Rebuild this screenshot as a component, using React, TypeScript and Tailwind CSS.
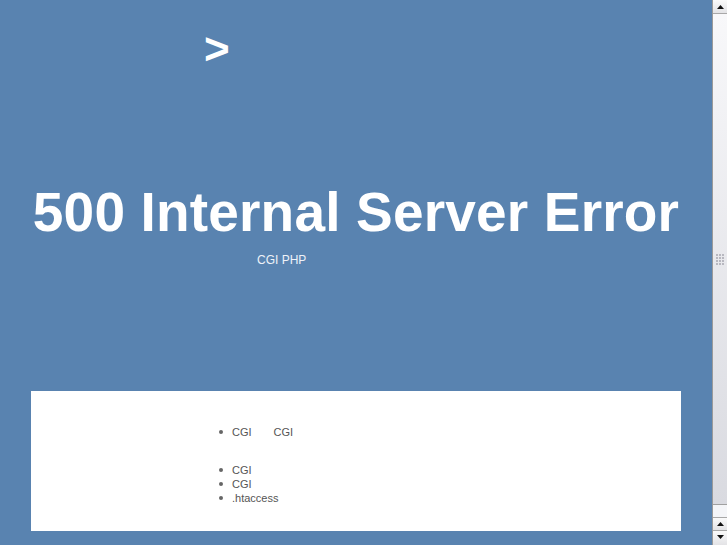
const font = { fontFamily: '"Liberation Sans", Arial, sans-serif' };

function ArrowUp() {
  return (
    <svg width="7" height="4" viewBox="0 0 7 4" className="block">
      <path d="M0 4 L3.5 0 L7 4 Z" fill="#111" />
    </svg>
  );
}

function ArrowDown() {
  return (
    <svg width="7" height="4" viewBox="0 0 7 4" className="block">
      <path d="M0 0 L7 0 L3.5 4 Z" fill="#111" />
    </svg>
  );
}

function Scrollbar() {
  return (
    <div className="flex h-full w-[15px] flex-col border-l border-[#9a9a9a] bg-[#eef0f4]">
      <div className="flex h-[14px] items-center justify-center border-b border-[#a8a8a8] bg-gradient-to-b from-[#fafafa] to-[#e3e3e6]">
        <ArrowUp />
      </div>
      <div className="flex h-[491px] items-center justify-center border-b border-[#a0a0a0] bg-gradient-to-b from-[#f8f8fa] to-[#d9dae0]">
        <div className="grid grid-cols-3 gap-[1px]">
          {Array.from({ length: 12 }).map((_, i) => (
            <span key={i} className="block h-[2px] w-[2px] bg-[#b8b8c0]" />
          ))}
        </div>
      </div>
      <div className="h-[12px] bg-[#f4f5f8]" />
      <div className="flex h-[14px] items-center justify-center border-y border-[#a8a8a8] bg-gradient-to-b from-[#fafafa] to-[#e3e3e6]">
        <ArrowUp />
      </div>
      <div className="flex flex-1 items-start justify-center bg-gradient-to-b from-[#fafafa] to-[#e3e3e6] pt-[4px]">
        <ArrowDown />
      </div>
    </div>
  );
}

function Item({ children }: { children: React.ReactNode }) {
  return (
    <li className="flex items-center">
      <span className="mr-[9px] block h-[4px] w-[4px] rounded-full bg-[#666]" />
      {children}
    </li>
  );
}

export default function App() {
  return (
    <div className="flex h-[545px] w-full overflow-hidden bg-[#5983b0]" style={font}>
      <main className="flex-1">
        <div className="mx-auto w-[650px]">
          <div className="pl-[173px] pt-[27px] text-[44px] font-bold leading-[44px] text-white">
            &gt;
          </div>
          <h1 className="mt-[114px] whitespace-nowrap text-center text-[55px] font-bold leading-[55px] tracking-[0.17px] text-white">
            500 Internal Server Error
          </h1>
          <p className="mt-[13px] pl-[226px] text-[12px] leading-[14px] text-[#eef2f8]">
            CGI PHP
          </p>
          <div className="mt-[124px] h-[140px] bg-white pl-[188px] pt-[34px] text-[11px] leading-[14px] text-[#555]">
            <ul>
              <Item>
                CGI<span className="inline-block w-[22px]" />CGI
              </Item>
            </ul>
            <ul className="mt-[24px]">
              <Item>CGI</Item>
              <Item>CGI</Item>
              <Item>.htaccess</Item>
            </ul>
          </div>
        </div>
      </main>
      <Scrollbar />
    </div>
  );
}
